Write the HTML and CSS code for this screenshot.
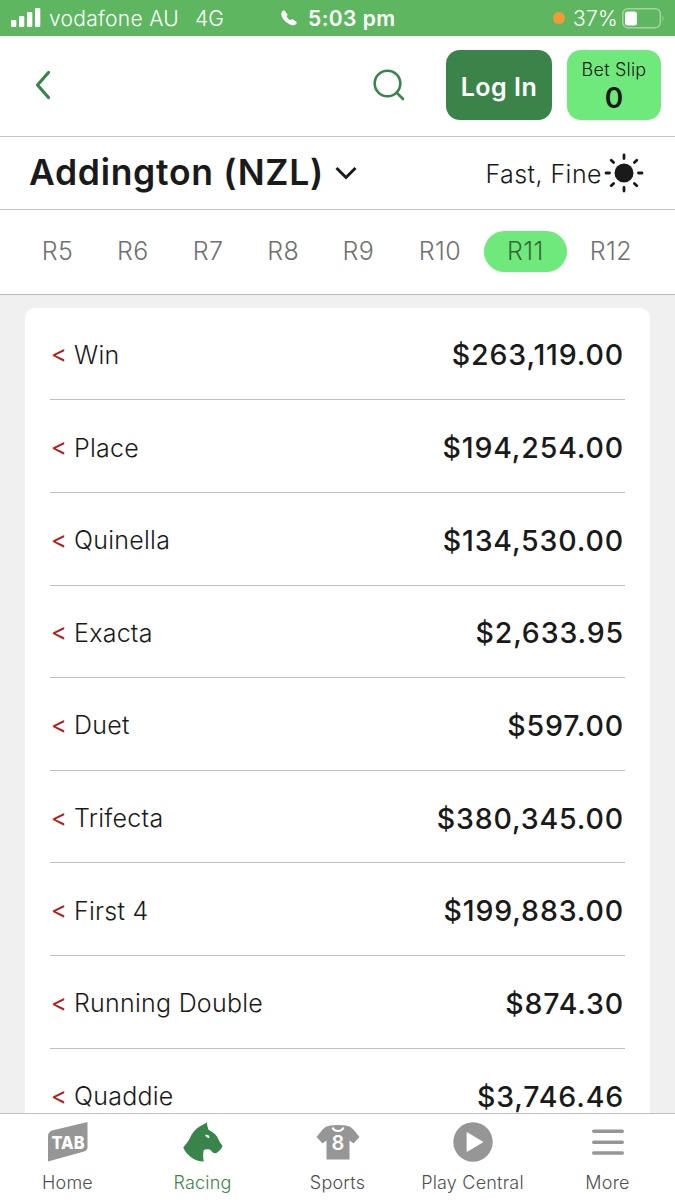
FILE: index.html
```html
<!DOCTYPE html>
<html lang="en">
<head>
    <meta charset="UTF-8">
    <meta name="viewport" content="width=device-width, initial-scale=1.0">
    <title>Addington (NZL) - Race 11</title>
    <link rel="stylesheet" href="styles.css">
</head>
<body>
    <!-- Status bar -->
    <div class="status-bar">
        <div class="status-left">
            <svg class="signal" width="30" height="19" viewBox="0 0 30 19" fill="#fff">
                <rect x="0" y="12" width="5.3" height="7" rx="1.3"/>
                <rect x="8" y="8" width="5.3" height="11" rx="1.3"/>
                <rect x="16" y="4" width="5.3" height="15" rx="1.3"/>
                <rect x="24" y="0" width="5.3" height="19" rx="1.3"/>
            </svg>
            <span class="carrier">vodafone AU</span>
            <span class="network">4G</span>
        </div>
        <div class="status-time">
            <svg width="16" height="16" viewBox="0 0 16 16" fill="#fff">
                <path d="M.6 2.400C1.500.8 3 .1 3.900.9L6.200 4.200c.5.800.2 1.500-.6 2.400.8 1.500 2 2.700 3.800 3.700 1.100-1.100 1.800-1.200 2.600-.7l3.200 2.200c.9.700.5 1.700-.7 2.800-1.500 1.300-4.300.8-7.200-1.200C4.500 11.900 2.300 9.700 1 6.900.3 5.100.1 3.500.6 2.400z"/>
            </svg>
            <span>5:03 pm</span>
        </div>
        <div class="status-right">
            <span class="mic-dot"></span>
            <span class="percent">37%</span>
            <svg width="43" height="21" viewBox="0 0 43 21">
                <rect x=".8" y=".8" width="37.500" height="19" rx="5" fill="none" stroke="#a3d69f" stroke-width="1.500"/>
                <rect x="3" y="3.500" width="12" height="14" rx="2.500" fill="#fff"/>
                <path d="M40.500 7.500q2 3 0 6z" fill="#a3d69f"/>
            </svg>
        </div>
    </div>

    <!-- Header -->
    <div class="header">
        <svg class="back" width="16" height="30" viewBox="0 0 16 30" fill="none" stroke="#38844a" stroke-width="3.200" stroke-linecap="round" stroke-linejoin="round">
            <path d="M13.500 2.500L2.500 15l11 12.500"/>
        </svg>
        <svg class="search" width="32" height="32" viewBox="0 0 32 32" fill="none" stroke="#38844a" stroke-width="2.600" stroke-linecap="round">
            <circle cx="14.500" cy="14.500" r="12.800"/>
            <path d="M24 24l6 6"/>
        </svg>
        <div class="btn login">Log In</div>
        <div class="btn bet-slip">
            <span class="slip-label">Bet Slip</span>
            <span class="slip-count">0</span>
        </div>
    </div>

    <!-- Meeting -->
    <div class="meeting">
        <h1>Addington (NZL)</h1>
        <svg class="chevron" width="22" height="14" viewBox="0 0 22 14" fill="none" stroke="#1a1a1a" stroke-width="3">
            <path d="M1.500 2L11 11.500 20.500 2"/>
        </svg>
        <span class="conditions">Fast, Fine</span>
        <svg class="sun" width="40" height="40" viewBox="-20 -20 40 40" stroke="#1a1a1a" stroke-width="2.800" stroke-linecap="round">
            <circle r="9.500" fill="#1a1a1a" stroke="none"/>
            <path d="M0-18v3.500M0 14.500V18M-18 0h3.500M14.500 0H18M-12.800-12.800l2.400 2.400M10.400 10.400l2.400 2.400M-12.800 12.800l2.400-2.400M10.400-10.400l2.400-2.400"/>
        </svg>
    </div>

    <!-- Race numbers -->
    <div class="races">
        <span class="race">R5</span>
        <span class="race">R6</span>
        <span class="race">R7</span>
        <span class="race">R8</span>
        <span class="race">R9</span>
        <span class="race wide">R10</span>
        <span class="race active">R11</span>
        <span class="race wide">R12</span>
    </div>

    <!-- Pools -->
    <div class="content">
        <div class="card">
            <div class="pool"><span class="arrow">&lt;</span><span class="name">Win</span><span class="amount">$263,119.00</span></div>
            <div class="pool"><span class="arrow">&lt;</span><span class="name">Place</span><span class="amount">$194,254.00</span></div>
            <div class="pool"><span class="arrow">&lt;</span><span class="name">Quinella</span><span class="amount">$134,530.00</span></div>
            <div class="pool"><span class="arrow">&lt;</span><span class="name">Exacta</span><span class="amount">$2,633.95</span></div>
            <div class="pool"><span class="arrow">&lt;</span><span class="name">Duet</span><span class="amount">$597.00</span></div>
            <div class="pool"><span class="arrow">&lt;</span><span class="name">Trifecta</span><span class="amount">$380,345.00</span></div>
            <div class="pool"><span class="arrow">&lt;</span><span class="name">First 4</span><span class="amount">$199,883.00</span></div>
            <div class="pool"><span class="arrow">&lt;</span><span class="name">Running Double</span><span class="amount">$874.30</span></div>
            <div class="pool"><span class="arrow">&lt;</span><span class="name">Quaddie</span><span class="amount">$3,746.46</span></div>
        </div>
    </div>

    <!-- Tab bar -->
    <div class="tab-bar">
        <div class="tab">
            <svg width="44" height="40" viewBox="0 0 44 40">
                <path d="M2 39.500V14q0-4 4-5.500L41.500 0v25q0 3.500-3.500 4.500z" fill="#969696"/>
                <text class="tab-logo" x="22" y="26.500" text-anchor="middle" textLength="33" lengthAdjust="spacingAndGlyphs">TAB</text>
            </svg>
            <span>Home</span>
        </div>
        <div class="tab selected">
            <svg width="40" height="40" viewBox="0 0 40 40" fill="#38844a">
                <path d="M24 .3C22.500 1.500 20 2.800 17.500 4 12 7 9 11.500 6.500 17 4.500 20.500 2 23 .3 25.500c1.700 4.500 5 8 9.200 10.700C13 38.300 17 39.500 20.800 39.500c-.9-4.500-.9-8.500 0-11.500 2-.9 4.200-.9 6.200-.3 1.500.5 1.700 1.800 2.800 2.800 1.300 1.200 3.400 1 5-.4 2-1.600 3.800-3.600 4.700-5.800-1-2.500-3.200-4.300-4-6.800-1.200-4-4.500-7-10-9.800-1-2.400-1.500-4.800-1.500-7.400z"/>
                <path d="M22 12.600l4 .9.500 2.500c-2 .2-3.900-.8-4.500-3.400z" fill="#fff"/>
            </svg>
            <span>Racing</span>
        </div>
        <div class="tab">
            <svg width="44" height="40" viewBox="0 0 44 40">
                <path d="M14 3.500Q22 2.500 30 3.500q4.500.8 7.200 3.800L43.500 15l-6 6.500-4-3V37.500h-23v-19l-4 3L.5 15l6.300-7.700Q9.500 4.300 14 3.500z" fill="#969696"/>
                <path d="M16.500 5.500q1.500 3.500 5.500 3.500t5.500-3.500" fill="none" stroke="#fff" stroke-width="2"/>
                <text class="shirt-number" x="22" y="28" text-anchor="middle">8</text>
            </svg>
            <span>Sports</span>
        </div>
        <div class="tab">
            <svg width="40" height="40" viewBox="0 0 40 40">
                <circle cx="20" cy="20" r="19.700" fill="#969696"/>
                <path d="M14.300 11l15 9-15 9z" fill="#fff" stroke="#fff" stroke-width="1.400" stroke-linejoin="round"/>
            </svg>
            <span>Play Central</span>
        </div>
        <div class="tab">
            <svg width="40" height="40" viewBox="0 0 40 40" stroke="#969696" stroke-width="3.400" stroke-linecap="round">
                <path d="M5.700 9.300h28.600M5.700 20.200h28.600M5.700 31h28.600"/>
            </svg>
            <span>More</span>
        </div>
    </div>
</body>
</html>
```
FILE: styles.css
```css
* {
    box-sizing: border-box;
}
body {
    font-family: Inter, 'Liberation Sans', sans-serif;
    font-weight: 300;
    color: #1a1a1a;
    background: #fff;
    margin: 0;
    height: 1200px;
    display: flex;
    flex-direction: column;
    overflow: hidden;
}
svg {
    display: block;
    flex: none;
}
span, h1 {
    white-space: nowrap;
}
.status-bar {
    height: 36px;
    flex: none;
    display: grid;
    grid-template-columns: 270px 1fr 123px;
    align-items: center;
    background: #5eb760;
    color: #fff;
    font-size: 21px;
}
.status-left {
    display: flex;
    align-items: center;
    padding-left: 11px;
}
.signal {
    margin-top: -2px;
}
.carrier {
    margin-left: 8px;
    letter-spacing: 0.3px;
}
.network {
    margin-left: 16px;
}
.status-time {
    display: flex;
    align-items: center;
    gap: 11px;
    padding-left: 11px;
    font-weight: 600;
    letter-spacing: 0.45px;
}
.status-right {
    display: flex;
    align-items: center;
}
.mic-dot {
    width: 12px;
    height: 12px;
    border-radius: 50%;
    background: #f29a38;
    margin-left: 1px;
}
.percent {
    width: 45px;
    margin-left: 8px;
    margin-right: 4px;
    letter-spacing: 0.2px;
}
.header {
    height: 101px;
    flex: none;
    display: flex;
    align-items: center;
    padding: 0 14px 2px 35px;
    border-bottom: 1px solid #c4c4c4;
}
.search {
    margin-left: auto;
    margin-right: 41px;
}
.btn {
    height: 70px;
    border-radius: 14px;
}
.login {
    width: 106px;
    display: flex;
    align-items: center;
    justify-content: center;
    background: #3a8449;
    color: #fff;
    font-size: 25px;
    font-weight: 600;
    letter-spacing: 0.5px;
    padding-top: 3px;
}
.bet-slip {
    width: 94px;
    margin-left: 15px;
    display: flex;
    flex-direction: column;
    align-items: center;
    background: #70e97c;
    padding-top: 8px;
}
.slip-label {
    font-size: 18px;
    line-height: 24px;
    letter-spacing: 0.2px;
}
.slip-count {
    font-size: 28px;
    line-height: 32px;
    font-weight: 600;
}
.meeting {
    height: 73px;
    flex: none;
    display: flex;
    align-items: center;
    padding: 0 31px 1px 29px;
    border-bottom: 1px solid #c4c4c4;
}
h1 {
    margin: 0;
    font-size: 35.5px;
    font-weight: 600;
    letter-spacing: 0.7px;
    width: 294px;
}
.chevron {
    margin-left: 12px;
}
.conditions {
    margin-left: auto;
    margin-right: 2px;
    padding-top: 2px;
    font-size: 25px;
    letter-spacing: 0.45px;
}
.races {
    height: 85px;
    flex: none;
    display: flex;
    align-items: center;
    padding: 0 0 1px 20px;
    border-bottom: 1px solid #b8b8b8;
}
.race {
    width: 75.2px;
    height: 41px;
    line-height: 41px;
    flex: none;
    text-align: center;
    font-size: 25px;
    letter-spacing: 0.4px;
    color: #707070;
}
.race.wide {
    width: 88px;
}
.race.active {
    width: 83px;
    border-radius: 21px;
    background: #70e97c;
    color: #35693b;
}
.content {
    flex: 1;
    min-height: 0;
    overflow: hidden;
    padding: 12.6px 25px 0;
    background: #f0f0f0;
}
.card {
    background: #fff;
    border-radius: 10px;
    padding: 0 25px;
}
.pool {
    height: 92.65px;
    display: flex;
    align-items: center;
    padding: 3px 1px 0 1px;
    border-bottom: 1px solid #c0c0c0;
}
.arrow {
    width: 23px;
    margin-top: -2px;
    font-size: 24px;
    font-weight: 400;
    color: #b01c20;
}
.name {
    font-size: 25px;
    letter-spacing: 0.25px;
}
.amount {
    margin-left: auto;
    font-size: 28.5px;
    font-weight: 550;
    letter-spacing: 0.85px;
}
.tab-bar {
    height: 87px;
    flex: none;
    display: grid;
    grid-template-columns: repeat(5, 1fr);
    border-top: 1px solid #c0c0c0;
    background: #fff;
}
.tab {
    display: flex;
    flex-direction: column;
    align-items: center;
    padding-top: 8px;
    gap: 9px;
    font-size: 18px;
    line-height: 24px;
    letter-spacing: 0.2px;
    color: #505050;
}
.tab.selected {
    color: #38844a;
}
.tab-logo {
    font-size: 18px;
    font-weight: 800;
    letter-spacing: 0;
    fill: #fff;
}
.shirt-number {
    font-size: 20px;
    font-weight: 600;
    letter-spacing: 0;
    fill: #fff;
}
```
